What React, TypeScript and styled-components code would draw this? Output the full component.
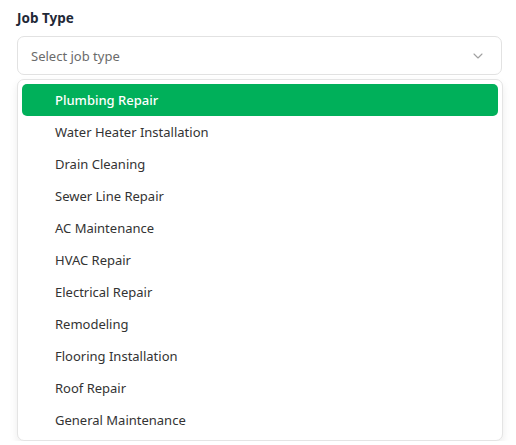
import React from "react";
import styled, { createGlobalStyle } from "styled-components";

const Global = createGlobalStyle`
  html, body { margin: 0; padding: 0; background: #ffffff; }
  body { font-family: "Noto Sans", "Open Sans", sans-serif; }
`;

const Page = styled.div`
  padding: 8px 14px 0 17px;
  display: flex;
  flex-direction: column;
  width: 485px;
`;

const Label = styled.div`
  font-size: 13.5px;
  font-weight: 700;
  color: #1f2937;
  line-height: 20px;
  margin-bottom: 8px;
`;

const Trigger = styled.button`
  box-sizing: border-box;
  height: 39px;
  width: 485px;
  display: flex;
  align-items: center;
  justify-content: space-between;
  padding: 0 15px 0 13px;
  border: 1px solid #e2e2e2;
  border-radius: 7px;
  background: #fff;
  font-family: inherit;
  font-size: 13px;
  color: #6b6b6b;
`;

const Menu = styled.div`
  box-sizing: border-box;
  margin-top: 4px;
  width: 486px;
  padding: 4px;
  border: 1px solid #e4e4e4;
  border-radius: 7px;
  background: #fff;
  box-shadow: 0 4px 8px rgba(0, 0, 0, 0.08);
  display: flex;
  flex-direction: column;
`;

const Item = styled.div<{ $active?: boolean }>`
  height: 32px;
  display: flex;
  align-items: center;
  padding-left: 33px;
  border-radius: 5px;
  font-size: 13px;
  color: ${(p) => (p.$active ? "#ffffff" : "#333333")};
  background: ${(p) => (p.$active ? "#00b05a" : "transparent")};
  font-weight: ${(p) => (p.$active ? 500 : 400)};
`;

const items = [
  "Plumbing Repair",
  "Water Heater Installation",
  "Drain Cleaning",
  "Sewer Line Repair",
  "AC Maintenance",
  "HVAC Repair",
  "Electrical Repair",
  "Remodeling",
  "Flooring Installation",
  "Roof Repair",
  "General Maintenance",
];

export default function App() {
  return (
    <>
      <Global />
      <Page>
        <Label>Job Type</Label>
        <Trigger>
          <span>Select job type</span>
          <svg width="16" height="16" viewBox="0 0 24 24" fill="none" stroke="#a0a0a0" strokeWidth="1.6" strokeLinecap="round" strokeLinejoin="round">
            <path d="M6 9l6 6 6-6" />
          </svg>
        </Trigger>
        <Menu>
          {items.map((t, i) => (
            <Item key={t} $active={i === 0}>{t}</Item>
          ))}
        </Menu>
      </Page>
    </>
  );
}
